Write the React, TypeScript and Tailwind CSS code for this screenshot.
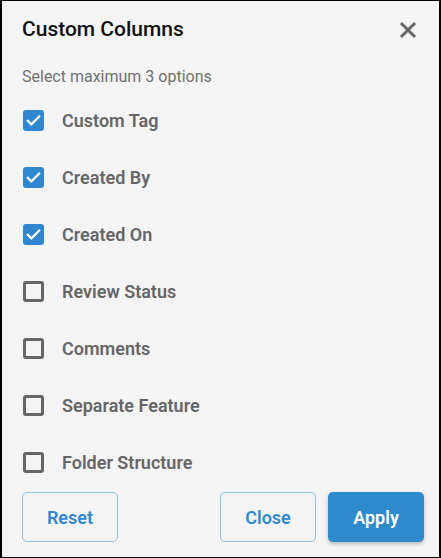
import React from "react";

const items = [
  { label: "Custom Tag", checked: true },
  { label: "Created By", checked: true },
  { label: "Created On", checked: true },
  { label: "Review Status", checked: false },
  { label: "Comments", checked: false },
  { label: "Separate Feature", checked: false },
  { label: "Folder Structure", checked: false },
];

function Box({ checked }: { checked: boolean }) {
  if (checked) {
    return (
      <div className="w-[21px] h-[21px] rounded-[3px] bg-[#2f88cf] flex items-center justify-center">
        <svg width="17" height="17" viewBox="0 0 24 24" fill="none">
          <path d="M4 12.5l5 5L20 6.5" stroke="#fff" strokeWidth="3.2" strokeLinecap="square" />
        </svg>
      </div>
    );
  }
  return <div className="w-[21px] h-[21px] rounded-[3px] border-[3px] border-[#666]" />;
}

export default function App() {
  return (
    <div
      className="w-[441px] h-[558px] bg-[#f4f4f4] border-t border-b border-l-2 border-r-2 border-black flex flex-col"
      style={{ fontFamily: "Roboto, 'Noto Sans', sans-serif" }}
    >
      <div className="flex items-center justify-between pl-[20px] pr-[22px] pt-[15px]">
        <div className="text-[21px] font-medium text-[#111] leading-[26px]">Custom Columns</div>
        <svg width="18" height="18" viewBox="0 0 18 18" className="mt-[1px]">
          <path d="M2 2L16 16M16 2L2 16" stroke="#666" strokeWidth="3" />
        </svg>
      </div>
      <div className="pl-[20px] mt-[25px] text-[16px] text-[#707070] leading-[20px]">Select maximum 3 options</div>
      <div className="flex flex-col pl-[21px] mt-[23px] gap-[36px]">
        {items.map((it) => (
          <div key={it.label} className="flex items-center h-[21px]">
            <Box checked={it.checked} />
            <span className="ml-[18px] text-[18px] font-semibold text-[#666] leading-[22px]">{it.label}</span>
          </div>
        ))}
      </div>
      <div className="flex items-center pl-[20px] pr-[15px] mt-[19px]">
        <button className="w-[96px] h-[50px] rounded-[5px] border border-[#92c3e6] text-[#2f88cf] text-[18px] font-semibold">
          Reset
        </button>
        <div className="flex-1" />
        <button className="w-[96px] h-[50px] rounded-[5px] border border-[#92c3e6] text-[#2f88cf] text-[18px] font-semibold">
          Close
        </button>
        <button className="ml-[12px] w-[96px] h-[50px] rounded-[5px] bg-[#2f8acc] text-white text-[18px] font-semibold shadow-[0_2px_4px_rgba(0,0,0,0.25)]">
          Apply
        </button>
      </div>
    </div>
  );
}
